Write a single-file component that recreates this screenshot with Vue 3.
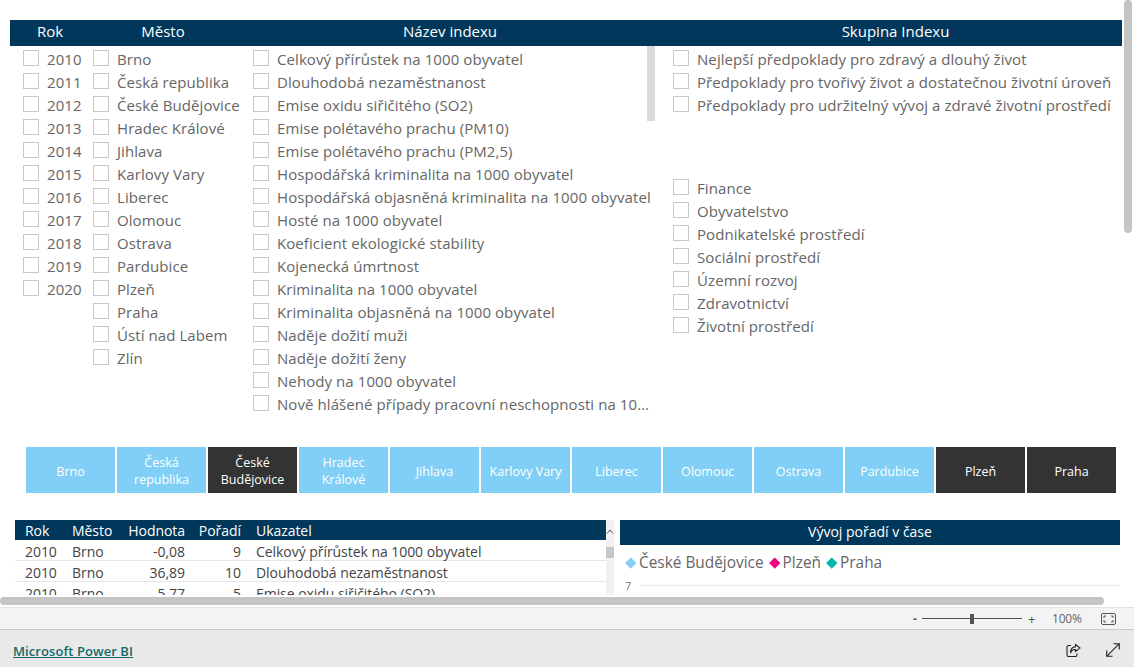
<script setup>
const years = ['2010','2011','2012','2013','2014','2015','2016','2017','2018','2019','2020']
const cities = ['Brno','Česká republika','České Budějovice','Hradec Králové','Jihlava','Karlovy Vary','Liberec','Olomouc','Ostrava','Pardubice','Plzeň','Praha','Ústí nad Labem','Zlín']
const indexes = ['Celkový přírůstek na 1000 obyvatel','Dlouhodobá nezaměstnanost','Emise oxidu siřičitého (SO2)','Emise polétavého prachu (PM10)','Emise polétavého prachu (PM2,5)','Hospodářská kriminalita na 1000 obyvatel','Hospodářská objasněná kriminalita na 1000 obyvatel','Hosté na 1000 obyvatel','Koeficient ekologické stability','Kojenecká úmrtnost','Kriminalita na 1000 obyvatel','Kriminalita objasněná na 1000 obyvatel','Naděje dožití muži','Naděje dožití ženy','Nehody na 1000 obyvatel','Nově hlášené případy pracovní neschopnosti na 1000 obyvatel']
const groups = ['Nejlepší předpoklady pro zdravý a dlouhý život','Předpoklady pro tvořivý život a dostatečnou životní úroveň','Předpoklady pro udržitelný vývoj a zdravé životní prostředí']
const areas = ['Finance','Obyvatelstvo','Podnikatelské prostředí','Sociální prostředí','Územní rozvoj','Zdravotnictví','Životní prostředí']
const buttons = [
  { t: 'Brno' }, { t: 'Česká republika' }, { t: 'České Budějovice', on: true }, { t: 'Hradec Králové' },
  { t: 'Jihlava' }, { t: 'Karlovy Vary' }, { t: 'Liberec' }, { t: 'Olomouc' }, { t: 'Ostrava' },
  { t: 'Pardubice' }, { t: 'Plzeň', on: true }, { t: 'Praha', on: true }
]
const rows = [
  ['2010','Brno','-0,08','9','Celkový přírůstek na 1000 obyvatel'],
  ['2010','Brno','36,89','10','Dlouhodobá nezaměstnanost'],
  ['2010','Brno','5,77','5','Emise oxidu siřičitého (SO2)']
]
const legend = [
  { t: 'České Budějovice', c: '#83cff6' },
  { t: 'Plzeň', c: '#f0047f' },
  { t: 'Praha', c: '#01b8aa' }
]
</script>

<template>
  <div class="app">
    <div class="canvas">
      <div class="slicers">
        <div class="col col-year">
          <div class="head">Rok</div>
          <div class="list"><div v-for="y in years" :key="y" class="item"><span class="box"></span><span class="lbl">{{ y }}</span></div></div>
        </div>
        <div class="col col-city">
          <div class="head">Město</div>
          <div class="list"><div v-for="c in cities" :key="c" class="item"><span class="box"></span><span class="lbl">{{ c }}</span></div></div>
        </div>
        <div class="col col-index">
          <div class="head">Název indexu</div>
          <div class="list"><div v-for="c in indexes" :key="c" class="item"><span class="box"></span><span class="lbl">{{ c }}</span></div></div>
          <div class="list-thumb"></div>
        </div>
        <div class="col col-group">
          <div class="head">Skupina Indexu</div>
          <div class="list"><div v-for="c in groups" :key="c" class="item"><span class="box"></span><span class="lbl">{{ c }}</span></div></div>
          <div class="list second"><div v-for="c in areas" :key="c" class="item"><span class="box"></span><span class="lbl">{{ c }}</span></div></div>
        </div>
      </div>

      <div class="buttons">
        <div v-for="b in buttons" :key="b.t" class="btn" :class="{ on: b.on }"><span>{{ b.t }}</span></div>
      </div>

      <div class="bottom">
        <div class="table-wrap">
          <div class="table">
            <div class="tr th">
              <span class="c1">Rok</span><span class="c2">Město</span><span class="c3">Hodnota</span><span class="c4">Pořadí</span><span class="c5">Ukazatel</span>
            </div>
            <div v-for="(r, i) in rows" :key="i" class="tr td">
              <span class="c1">{{ r[0] }}</span><span class="c2">{{ r[1] }}</span><span class="c3">{{ r[2] }}</span><span class="c4">{{ r[3] }}</span><span class="c5">{{ r[4] }}</span>
            </div>
          </div>
          <div class="tscroll">
            <svg class="caret" width="8" height="5" viewBox="0 0 8 5"><path d="M1 4.5 L4 1 L7 4.5" fill="none" stroke="#555" stroke-width="1"/></svg>
            <div class="tthumb"></div>
          </div>
        </div>
        <div class="chart">
          <div class="chart-title">Vývoj pořadí v čase</div>
          <div class="legend">
            <span v-for="l in legend" :key="l.t" class="leg"><i class="dia" :style="{ background: l.c }"></i>{{ l.t }}</span>
          </div>
          <div class="axis"><span>7</span><i></i></div>
        </div>
      </div>

      <div class="hbar"></div>
      <div class="vbar"></div>
    </div>

    <div class="status">
      <span class="minus">-</span>
      <div class="slider"><i></i></div>
      <span class="plus">+</span>
      <span class="pct">100%</span>
      <svg class="fit" width="15" height="12" viewBox="0 0 15 12" fill="none" stroke="#555" stroke-width="1">
        <rect x="0.5" y="0.5" width="14" height="11" rx="1.5"/>
        <path d="M3 5 V3 H5 M10 3 H12 V5 M3 7 V9 H5 M10 9 H12 V7"/>
      </svg>
    </div>

    <div class="footer">
      <a class="brand">Microsoft Power BI</a>
      <svg class="share" width="15" height="15" viewBox="0 0 15 15" fill="none" stroke="#222" stroke-width="1.1">
        <path d="M5 2.5 H2.5 Q1 2.5 1 4 V12 Q1 13.5 2.5 13.5 H9.5 Q11 13.5 11 12 V10.5"/>
        <path d="M9.5 1.5 L14 5 L9.5 8.5 V6.5 Q6 6.2 4.5 10 Q4.5 4.2 9.5 3.6 Z"/>
      </svg>
      <svg class="expand" width="14" height="14" viewBox="0 0 14 14" fill="none" stroke="#222" stroke-width="1.1">
        <path d="M0.7 13.3 L13.3 0.7 M7.5 0.7 H13.3 V6.5 M0.7 7.5 V13.3 H6.5"/>
      </svg>
    </div>
  </div>
</template>

<style scoped>
.app {
  width: 1134px;
  height: 667px;
  display: flex;
  flex-direction: column;
  overflow: hidden;
  background: #fff;
  font-family: "Open Sans", "Noto Sans", sans-serif;
  color: #666;
}
.canvas {
  position: relative;
  height: 607px;
  flex: none;
  overflow: hidden;
  padding: 20px 12px 0 10px;
  box-sizing: border-box;
}
.slicers {
  display: grid;
  grid-template-columns: 80px 146px 428px 458px;
  height: 427px;
}
.col { position: relative; min-width: 0; }
.head {
  height: 26px;
  line-height: 23px;
  background: #00375a;
  color: #fff;
  text-align: center;
  font-size: 15px;
}
.col-group .head { padding-left: 5px; }
.list { padding-top: 3px; }
.col-year .list { padding-left: 13px; }
.col-city .list { padding-left: 3px; }
.col-index .list { padding-left: 17px; padding-right: 12px; }
.col-group .list { padding-left: 9px; }
.list.second { padding-top: 60px; }
.item {
  display: flex;
  align-items: flex-start;
  height: 23px;
  font-size: 15px;
  letter-spacing: 0.08px;
  line-height: 20px;
  white-space: nowrap;
}
.box {
  width: 16px;
  height: 16px;
  flex: none;
  box-sizing: border-box;
  border: 1px solid #c8c8c8;
  margin: 1px 8px 0 0;
}
.col-index .lbl { overflow: hidden; text-overflow: ellipsis; min-width: 0; }
.list-thumb {
  position: absolute;
  left: 411px;
  top: 26px;
  width: 8px;
  height: 75px;
  background: #d9d9d9;
}
.buttons {
  display: flex;
  gap: 2px;
  margin-left: 16px;
  height: 46px;
}
.btn {
  width: 89px;
  height: 46px;
  flex: none;
  display: flex;
  align-items: center;
  justify-content: center;
  text-align: center;
  background: #81cff6;
  color: #fff;
  font-size: 12.5px;
  line-height: 17px;
  padding: 2px 7px 0;
  box-sizing: border-box;
}
.btn.on { background: #333; }
.bottom {
  display: flex;
  margin: 27px 0 0 5px;
  height: 75px;
}
.table-wrap {
  width: 599px;
  flex: none;
  display: flex;
  height: 75px;
  overflow: hidden;
}
.table { width: 591px; flex: none; overflow: hidden; }
.tr {
  display: flex;
  font-size: 14px;
  letter-spacing: -0.05px;
  white-space: nowrap;
}
.th {
  height: 20px;
  line-height: 21px;
  background: #00375a;
  color: #fff;
}
.td {
  height: 21px;
  line-height: 23px;
  color: #444;
  border-bottom: 1px solid #e6e6e6;
  box-sizing: border-box;
}
.c1 { width: 57px; padding-left: 10px; box-sizing: border-box; }
.c2 { width: 56px; }
.c3 { width: 57px; text-align: right; }
.c4 { width: 56px; text-align: right; }
.c5 { padding-left: 15px; }
.tscroll {
  width: 8px;
  flex: none;
  background: #f1f1f1;
  position: relative;
}
.caret { position: absolute; left: 0; top: 9px; }
.tthumb {
  position: absolute;
  left: 0;
  top: 27px;
  width: 8px;
  height: 11px;
  background: #c8c8c8;
}
.chart { margin-left: 6px; width: 500px; flex: none; }
.chart-title {
  height: 25px;
  line-height: 23px;
  background: #00375a;
  color: #fff;
  text-align: center;
  font-size: 14px;
}
.legend {
  display: flex;
  gap: 7px;
  padding: 7px 0 0 7px;
  height: 22px;
  font-size: 15.4px;
  line-height: 20px;
  color: #666;
}
.leg { display: flex; align-items: center; }
.dia {
  width: 7.5px;
  height: 7.5px;
  margin-right: 4.5px;
  transform: rotate(45deg);
}
.axis {
  display: flex;
  align-items: center;
  gap: 9px;
  padding-left: 5px;
  font-size: 11px;
  color: #777;
  margin-top: 4px;
}
.axis i { flex: 1; height: 1px; background: #eaeaea; }
.hbar {
  position: absolute;
  left: 0;
  top: 597px;
  width: 1104px;
  height: 8px;
  border-radius: 4px;
  background: #c4c4c4;
}
.vbar {
  position: absolute;
  left: 1124px;
  top: 0;
  width: 8px;
  height: 233px;
  border-radius: 4px;
  background: #c4c4c4;
}
.status {
  height: 23px;
  flex: none;
  box-sizing: border-box;
  border-top: 1px solid #e3e3e3;
  border-bottom: 1px solid #c8c8c8;
  background: #f3f3f3;
  display: flex;
  align-items: center;
  padding-left: 913px;
  font-size: 12px;
  color: #555;
}
.minus { width: 9px; font-weight: 700; }
.slider {
  position: relative;
  width: 100px;
  height: 1px;
  background: #555;
}
.slider i {
  position: absolute;
  left: 48px;
  top: -4px;
  width: 4px;
  height: 10px;
  background: #555;
}
.plus { margin-left: 6px; width: 12px; font-size: 13px; }
.pct { margin-left: 12px; width: 49px; font-size: 12px; color: #666; letter-spacing: -0.2px; }
.fit { flex: none; }
.footer {
  height: 37px;
  flex: none;
  background: #e9e9e9;
  display: flex;
  align-items: center;
  padding: 0 14px 0 13px;
}
.brand {
  font-size: 13px;
  font-weight: 600;
  color: #136a6a;
  text-decoration: underline;
  letter-spacing: 0.08px;
  margin-top: 4px;
}
.share { margin-left: auto; margin-right: 25px; margin-top: 3px; }
.expand { margin-top: 3px; }
</style>

<style>
html, body { margin: 0; background: #fff; }
</style>
